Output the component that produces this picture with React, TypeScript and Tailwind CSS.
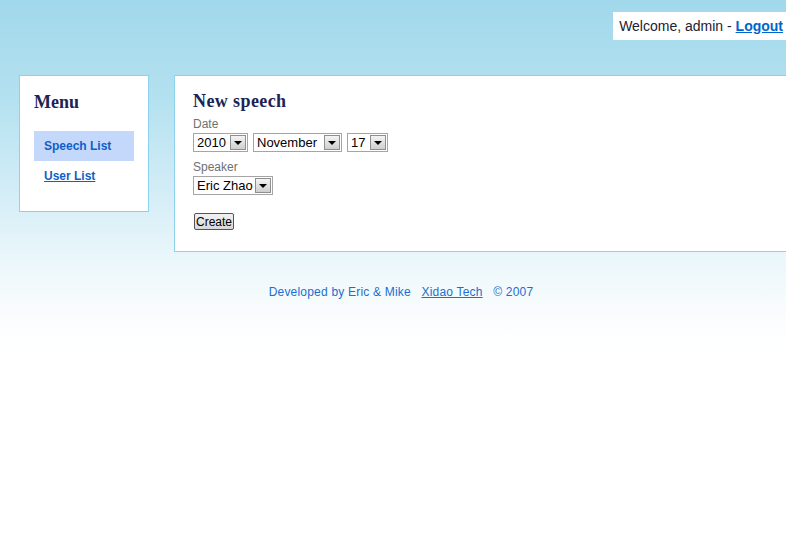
const Select = ({ value, width }: { value: string; width: string }) => (
    <div className={`flex items-center h-[19px] border border-[#a5a5a5] bg-white ${width}`}>
        <span className="flex-1 overflow-hidden pl-[3px] text-[13px] leading-none text-black whitespace-nowrap">{value}</span>
        <span className="shrink-0 mr-[1px] flex items-center justify-center w-[16px] h-[15px] border border-[#8f8f8f] bg-gradient-to-b from-[#f4f4f4] to-[#cfcfcf]">
            <span className="w-0 h-0 border-l-[4px] border-r-[4px] border-t-[4px] border-l-transparent border-r-transparent border-t-black" />
        </span>
    </div>
);

const App = () => {
    return (
        <div className="min-h-[557px] w-full overflow-hidden bg-[linear-gradient(to_bottom,#a1d8eb_0px,#b4e1f0_100px,#d6eef7_200px,#eef8fb_270px,#fbfdfe_320px,#ffffff_350px)] font-['Liberation_Sans',Arial,sans-serif]">
            {/* header */}
            <div className="h-[75px] flex justify-end items-start pt-[12px]">
                <div className="h-[28px] bg-white flex items-center pl-[6px] pr-[3px] text-[14px] text-[#222233]">
                    Welcome, admin -&nbsp;<a href="#" className="font-bold text-[#0066cc] underline">Logout</a>
                </div>
            </div>

            <div className="flex items-start pl-[19px] gap-[25px]">
                {/* menu */}
                <div className="w-[130px] h-[137px] shrink-0 bg-white border border-[#8dd2ec] pl-[14px] pt-[16px]">
                    <h2 className="font-['Liberation_Serif',serif] font-bold text-[18px] text-[#1a2456] leading-[20px]">Menu</h2>
                    <div className="mt-[19px] w-[100px] h-[30px] bg-[#c4d8fc] flex items-center pl-[10px]">
                        <a href="#" className="text-[12px] font-bold text-[#0f5fc8]">Speech List</a>
                    </div>
                    <div className="h-[30px] flex items-center pl-[10px]">
                        <a href="#" className="text-[12px] font-bold text-[#0f5fc8] underline">User List</a>
                    </div>
                </div>

                {/* main */}
                <div className="flex-1 mr-[-20px] h-[177px] bg-white border border-[#8dd2ec] pl-[18px] pt-[15px]">
                    <h1 className="font-['Liberation_Serif',serif] font-bold text-[18px] text-[#1a2456] leading-[20px] tracking-[0.4px]">New speech</h1>
                    <div className="mt-[6px] text-[12px] text-[#707070] leading-[15px]">Date</div>
                    <div className="flex gap-[5px] mt-[1px]">
                        <Select value="2010" width="w-[55px]" />
                        <Select value="November" width="w-[89px]" />
                        <Select value="17" width="w-[41px]" />
                    </div>
                    <div className="mt-[8px] text-[12px] text-[#707070] leading-[15px]">Speaker</div>
                    <div className="flex mt-[1px]">
                        <Select value="Eric Zhao" width="w-[80px]" />
                    </div>
                    <button className="mt-[18px] ml-[1px] h-[17px] px-[1px] text-[12px] leading-none text-black border border-[#555] rounded-[2px] bg-gradient-to-b from-[#f2f2f2] to-[#d8d8d8]">
                        Create
                    </button>
                </div>
            </div>

            {/* footer */}
            <div className="mt-[31px] pl-[16px] text-center text-[12px] tracking-[0.2px] text-[#1a6fd0]">
                Developed by Eric &amp; Mike&nbsp;&nbsp;&nbsp;<a href="#" className="underline">Xidao Tech</a>&nbsp;&nbsp;&nbsp;© 2007
            </div>
        </div>
    );
};

export default App;
